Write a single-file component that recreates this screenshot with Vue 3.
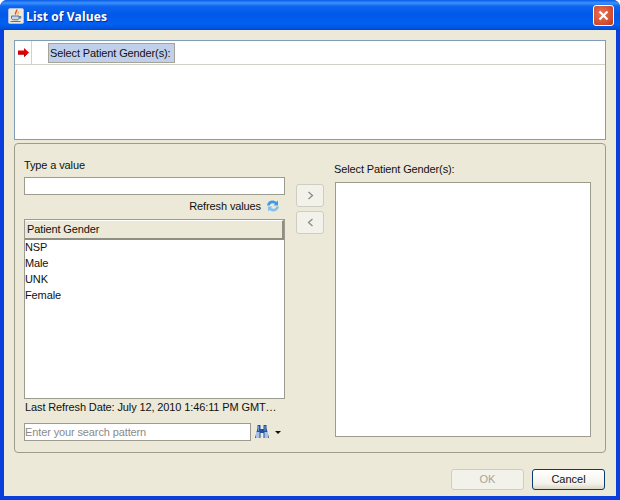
<script setup>
const rows = ['NSP', 'Male', 'UNK', 'Female']
const label = 'Select Patient Gender(s):'
</script>

<template>
  <div class="window">
    <header class="titlebar">
      <svg class="java" width="16" height="16" viewBox="0 0 16 16">
        <rect x="0.5" y="0.5" width="15" height="15" rx="1.5" fill="#ece9d8" stroke="#a9bfe6" />
        <path d="M8.500 1.500c1.500 1.800-2.500 2.700-.8 5.200" fill="none" stroke="#e8581c" stroke-width="1.500" />
        <path d="M10.700 3.500c.6 1.100-1.600 1.600-.7 3" fill="none" stroke="#f0a060" stroke-width="1.100" />
        <path d="M3.500 8h7.500v2.200c0 1-1 1.600-2 1.600H5.500c-1 0-2-.6-2-1.600z" fill="#cfd6e0" stroke="#56749e" />
        <path d="M11 8.500h1.800v1.600H11M2.500 13.500h10" fill="none" stroke="#56749e" />
      </svg>
      <span class="title">List of Values</span>
      <span class="close">
        <svg width="11" height="11" viewBox="0 0 11 11">
          <path d="M1.500 1.500l8 8M9.500 1.500l-8 8" stroke="#fff" stroke-width="2.200" />
        </svg>
      </span>
    </header>

    <main class="content">
      <section class="top-panel">
        <div class="step-row">
          <div class="marker">
            <svg width="11" height="9" viewBox="0 0 11 9">
              <path d="M0 2.500h6V0l5 4.500L6 9V6.500H0z" fill="#e0000b" />
              <path d="M0 5.500h6.500v2L11 4.500 6 9V6.500H0z" fill="#a80008" />
            </svg>
          </div>
          <div class="chip">{{ label }}</div>
        </div>
      </section>

      <section class="lower-panel">
        <div class="left-col">
          <div class="field-label">Type a value</div>
          <div class="text-input"></div>
          <div class="refresh">
            <span>Refresh values</span>
            <svg width="14" height="14" viewBox="0 0 14 14">
              <path d="M1 6.500C1.500 3 4.500 1 8 1.800c1 .2 1.700.6 2.300 1.100L12 1.500V6.500H7.500l1.600-1.600C7 3.500 4.500 4 3.600 6.500z" fill="#3f9ae6" />
              <path d="M13 7.500c-.5 3.500-3.500 5.500-7 4.700-1-.2-1.700-.6-2.300-1.100L2 12.500V7.500h4.500L4.900 9.100c2.100 1.400 4.600.9 5.500-1.600z" fill="#82bff0" />
            </svg>
          </div>
          <div class="list">
            <div class="list-header">Patient Gender</div>
            <div v-for="row in rows" :key="row" class="list-row">{{ row }}</div>
          </div>
          <div class="refresh-date">Last Refresh Date: July 12, 2010 1:46:11 PM GMT…</div>
          <div class="search">
            <div class="search-input">Enter your search pattern</div>
            <svg class="binoc" width="14" height="14" viewBox="0 0 14 14">
              <path d="M2.500 0h3v4h3V0h3v3L14 13H8.500V8h-3v5H0L2.500 3z" fill="#24519c" />
              <rect x="1" y="7" width="3.500" height="6" fill="#a9c2e8" />
              <rect x="9.500" y="7" width="3.500" height="6" fill="#a9c2e8" />
              <rect x="3" y="1" width="1" height="5" fill="#6f97d6" />
              <rect x="9.500" y="1" width="1" height="5" fill="#6f97d6" />
            </svg>
            <span class="caret"></span>
          </div>
        </div>

        <div class="transfer">
          <button class="move" disabled>
            <svg width="7" height="9" viewBox="0 0 7 9"><path d="M1.500 1l4 3.500-4 3.500" fill="none" stroke="#8c8c84" stroke-width="1.300" /></svg>
          </button>
          <button class="move" disabled>
            <svg width="7" height="9" viewBox="0 0 7 9"><path d="M5.500 1l-4 3.500 4 3.500" fill="none" stroke="#8c8c84" stroke-width="1.300" /></svg>
          </button>
        </div>

        <div class="right-col">
          <div class="field-label right-label">{{ label }}</div>
          <div class="selected"></div>
        </div>
      </section>

      <footer class="actions">
        <button class="action" disabled>OK</button>
        <button class="action primary">Cancel</button>
      </footer>
    </main>
  </div>
</template>

<style>
html, body { margin: 0; background: #fff; }
</style>

<style scoped>
.window {
  width: 620px;
  height: 500px;
  box-sizing: border-box;
  display: flex;
  flex-direction: column;
  font: 11px/13px "Liberation Sans", "Noto Sans", sans-serif;
  letter-spacing: -0.12px;
  color: #111;
  background: #0a3fdc;
  border-radius: 7px 7px 0 0;
  overflow: hidden;
  padding: 0 4px 4px;
}
.titlebar {
  height: 30px;
  margin: 0 -4px;
  padding: 2px 6px 0 8px;
  box-sizing: border-box;
  display: flex;
  align-items: center;
  gap: 2px;
  flex: none;
  background: linear-gradient(#0a5ce8 0, #3b93fb 3px, #0f66f0 6px, #0058e8 14px, #0060f2 24px, #0053e0 28px, #0044c8 30px);
}
.java { flex: none; }
.title {
  flex: 1;
  padding-top: 1px;
  color: #fff;
  font: bold 12px/16px "Open Sans", "Liberation Sans", sans-serif;
  letter-spacing: 0.1px;
  text-shadow: 1px 1px 0 #0a2f9c;
}
.close {
  width: 21px;
  height: 21px;
  margin-top: -1px;
  box-sizing: border-box;
  display: flex;
  align-items: center;
  justify-content: center;
  border: 1px solid #fff;
  border-radius: 3px;
  background: radial-gradient(circle at 40% 40%, #e8755a, #cf4a2c 70%, #b8391e);
}
.content {
  flex: 1;
  background: #ece9d8;
  padding: 10px 10px 6px;
  display: flex;
  flex-direction: column;
  min-height: 0;
}
.top-panel {
  height: 100px;
  box-sizing: border-box;
  background: #fff;
  border: 1px solid #7f9db9;
  flex: none;
}
.step-row {
  height: 23px;
  display: flex;
  align-items: center;
  border-bottom: 1px solid #d4d2c6;
}
.marker {
  width: 17px;
  height: 23px;
  box-sizing: border-box;
  padding-left: 3px;
  display: flex;
  align-items: center;
  border-right: 1px solid #d4d2c6;
}
.chip {
  margin-left: 16px;
  height: 20px;
  box-sizing: border-box;
  padding: 3px 3px 0 1px;
  background: #c1d0ea;
  border: 1px solid #a3a398;
  white-space: nowrap;
}
.lower-panel {
  margin-top: 3px;
  height: 310px;
  flex: none;
  box-sizing: border-box;
  border: 1px solid #9c9b8e;
  border-radius: 4px;
  padding: 15px 14px 0 9px;
  display: grid;
  grid-template-columns: 261px 28px 1fr;
  column-gap: 11px;
}
.left-col, .right-col { display: flex; flex-direction: column; }
.field-label { height: 18px; white-space: nowrap; }
.text-input {
  height: 18px;
  box-sizing: border-box;
  background: #fff;
  border: 1px solid #9c9b8e;
}
.refresh {
  height: 24px;
  box-sizing: border-box;
  padding: 0 5px 2px 0;
  display: flex;
  align-items: center;
  justify-content: flex-end;
  gap: 5px;
}
.list {
  height: 180px;
  box-sizing: border-box;
  background: #fff;
  border: 1px solid #9c9b8e;
}
.list-header {
  height: 20px;
  box-sizing: border-box;
  padding: 2px 0 0 2px;
  background: #ece9d8;
  border-top: 1px solid #fff;
  border-bottom: 2px solid #8f8e82;
  border-right: 2px solid #8f8e82;
}
.list-row { height: 16px; line-height: 14px; }
.refresh-date {
  height: 24px;
  padding-left: 1px;
  line-height: 17px;
  white-space: nowrap;
}
.search { display: flex; align-items: center; }
.search-input {
  width: 227px;
  height: 18px;
  box-sizing: border-box;
  background: #fff;
  border: 1px solid #9c9b8e;
  color: #8a8a8a;
  padding-left: 0;
  line-height: 16px;
  white-space: nowrap;
}
.binoc { margin-left: 4px; }
.caret {
  margin-left: 6px;
  width: 0;
  height: 0;
  border: 3px solid transparent;
  border-top: 3px solid #111;
  border-bottom: 0;
}
.transfer {
  display: flex;
  flex-direction: column;
  gap: 4px;
  padding-top: 25px;
}
.move {
  width: 28px;
  height: 23px;
  padding: 0;
  display: flex;
  align-items: center;
  justify-content: center;
  background: #f3f2ea;
  border: 1px solid #cfcdc0;
  border-radius: 3px;
}
.right-label { height: 23px; padding-top: 4px; margin-left: -1px; box-sizing: border-box; }
.selected {
  height: 255px;
  box-sizing: border-box;
  background: #fff;
  border: 1px solid #9c9b8e;
}
.actions {
  margin-top: 16px;
  display: flex;
  justify-content: flex-end;
  gap: 8px;
  padding-right: 1px;
}
.action {
  width: 73px;
  height: 21px;
  padding: 0;
  font: inherit;
  background: #f3f2ea;
  color: #a6a598;
  border: 1px solid #cfcdc0;
  border-radius: 3px;
}
.primary {
  color: #111;
  background: linear-gradient(#fff, #f4f3ec 70%, #dcd8c8);
  border-color: #0a3a6e;
}
</style>
